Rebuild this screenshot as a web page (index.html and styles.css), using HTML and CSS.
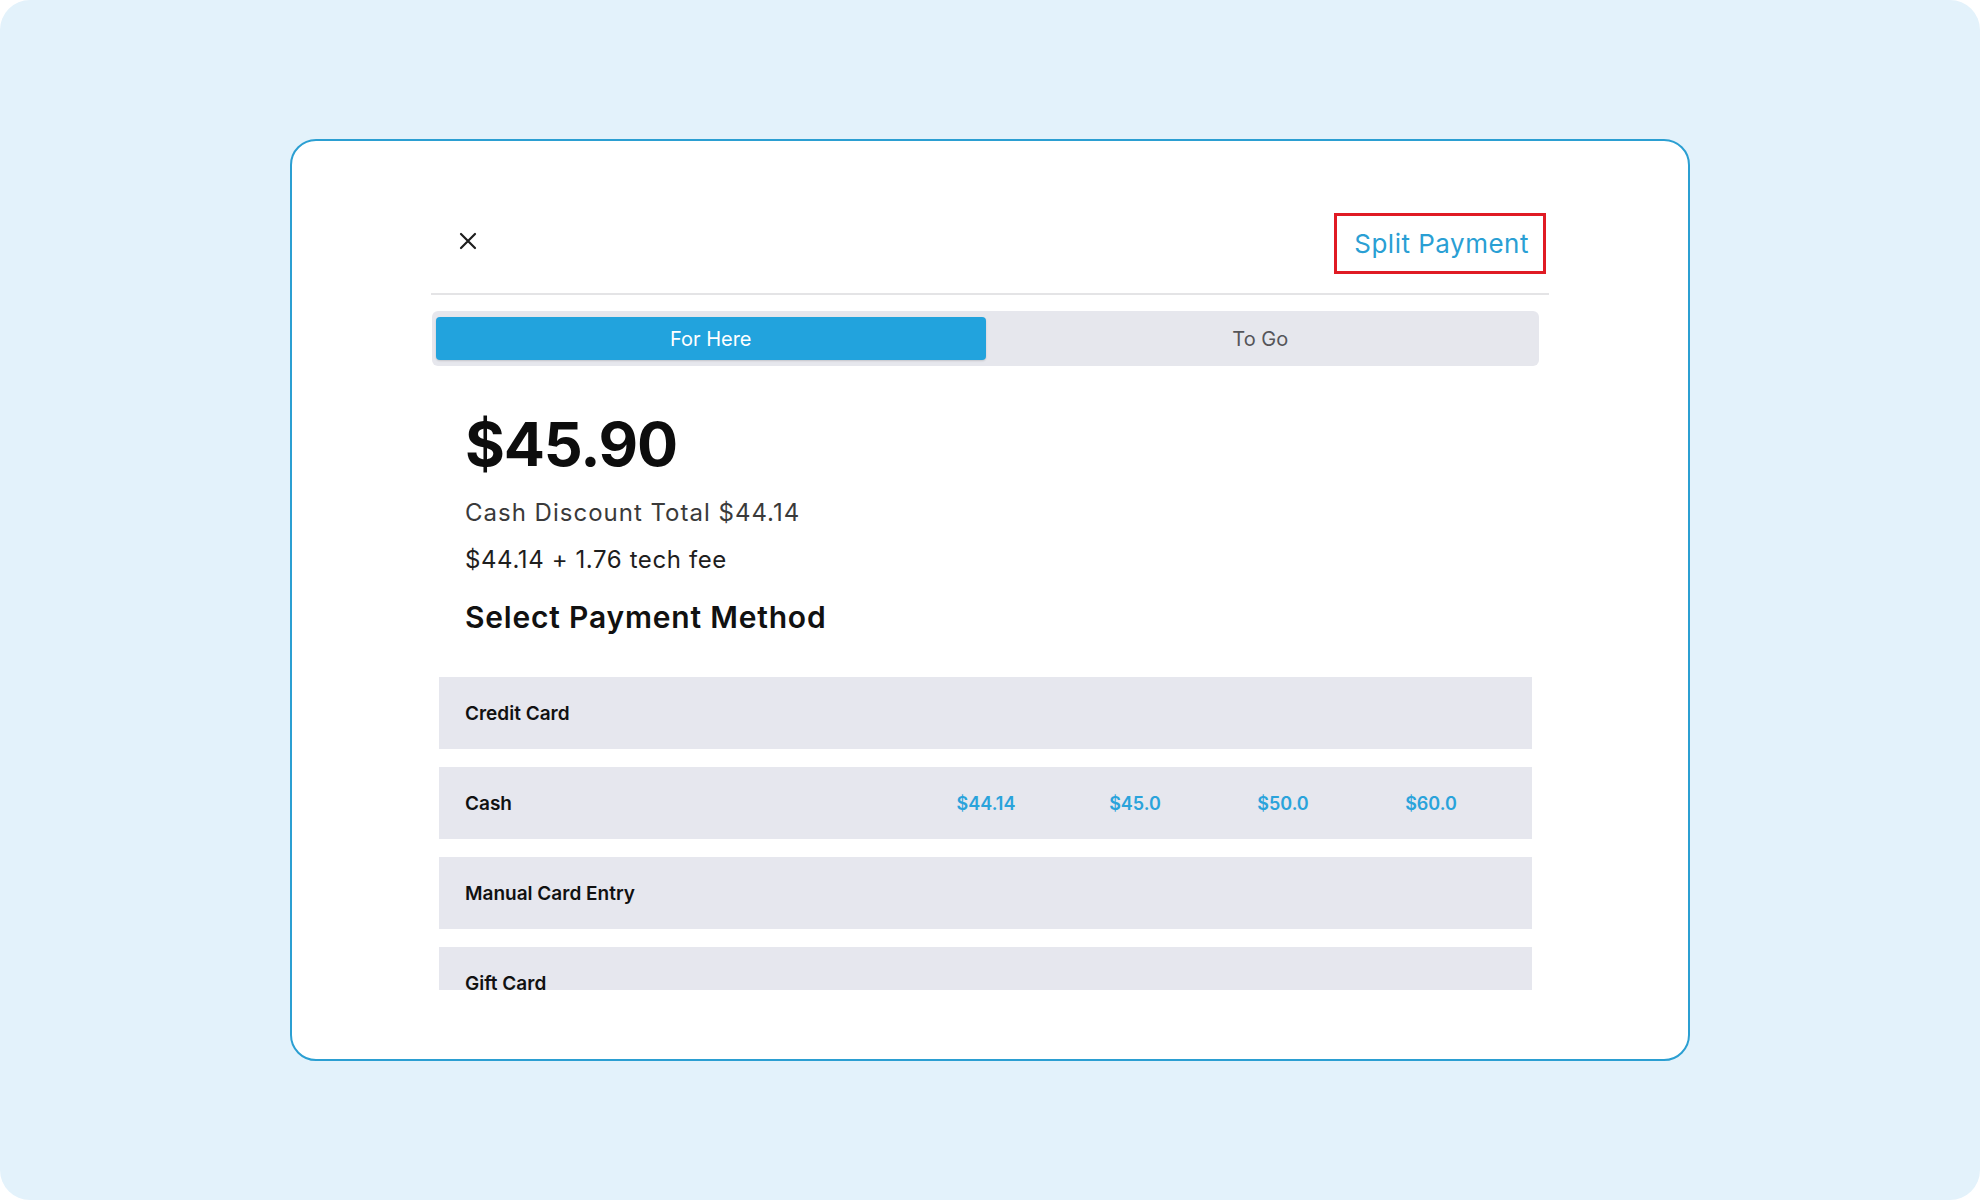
FILE: index.html
```html
<!DOCTYPE html>
<html>
<head>
<meta charset="utf-8">
<link rel="stylesheet" href="styles.css">
</head>
<body>
<div class="page">
  <div class="card">
    <div class="content">
      <div class="header">
        <button class="close" aria-label="Close">
          <svg width="18" height="18" viewBox="0 0 18 18"><path d="M2 2 L16 16 M16 2 L2 16" stroke="#1e1e1e" stroke-width="2.2" stroke-linecap="round" fill="none"/></svg>
        </button>
        <div class="split">Split Payment</div>
      </div>
      <div class="divider"></div>
      <div class="segment">
        <div class="seg active">For Here</div>
        <div class="seg">To Go</div>
      </div>
      <div class="summary">
        <div class="price">$45.90</div>
        <div class="line">Cash Discount Total $44.14</div>
        <div class="line dark">$44.14 + 1.76 tech fee</div>
        <div class="heading">Select Payment Method</div>
      </div>
      <div class="methods">
        <div class="row"><span class="label">Credit Card</span></div>
        <div class="row">
          <span class="label">Cash</span>
          <div class="amounts">
            <span>$44.14</span><span>$45.0</span><span>$50.0</span><span>$60.0</span>
          </div>
        </div>
        <div class="row"><span class="label">Manual Card Entry</span></div>
        <div class="row"><span class="label">Gift Card</span></div>
      </div>
    </div>
  </div>
</div>
</body>
</html>
```
FILE: styles.css
```css
html, body {
  margin: 0;
  padding: 0;
  background: #ffffff;
}
body {
  font-family: Inter, "Noto Sans", "Liberation Sans", sans-serif;
  color: #111;
}
.page {
  width: 1980px;
  height: 1200px;
  background: #e3f2fb;
  border-radius: 30px;
  display: flex;
  align-items: center;
  justify-content: center;
}
.card {
  box-sizing: border-box;
  width: 1400px;
  height: 922px;
  background: #ffffff;
  border: 2px solid #2b9fd2;
  border-radius: 26px;
  padding-top: 72px;
  padding-left: 139px;
}
.content {
  width: 1118px;
}
.header {
  display: flex;
  align-items: center;
  justify-content: space-between;
  height: 61px;
}
.close {
  border: 0;
  background: transparent;
  padding: 0;
  margin-left: 28px;
  margin-bottom: 5px;
  width: 18px;
  height: 18px;
  display: flex;
}
.split {
  box-sizing: border-box;
  height: 61px;
  margin-right: 3px;
  padding: 0 14px 0 17px;
  border: 3px solid #e01b24;
  color: #2a9fd4;
  font-size: 26px;
  letter-spacing: 0.5px;
  display: flex;
  align-items: center;
}
.divider {
  height: 2px;
  background: #e4e4e6;
  margin-top: 19px;
}
.segment {
  box-sizing: border-box;
  margin-top: 16px;
  margin-left: 1px;
  width: 1107px;
  height: 55px;
  background: #e6e7ed;
  border-radius: 6px;
  padding: 6px 4px 6px 4px;
  display: flex;
}
.seg {
  flex: 1;
  display: flex;
  align-items: center;
  justify-content: center;
  font-size: 20px;
  color: #555559;
  border-radius: 4px;
}
.seg.active {
  background: #22a3dd;
  color: #ffffff;
  box-shadow: 0 1px 2px rgba(0,0,0,0.15);
}
.summary {
  padding-left: 34px;
  padding-top: 46px;
}
.price {
  font-size: 61px;
  font-weight: 700;
  line-height: 64px;
  letter-spacing: -1.2px;
  color: #0d0d0d;
}
.line {
  font-size: 24px;
  line-height: 47px;
  letter-spacing: 1px;
  color: #3a3a3a;
  margin-top: 13px;
}
.line.dark {
  margin-top: 0;
  letter-spacing: 0.6px;
  color: #1e1e1e;
}
.heading {
  font-size: 30px;
  font-weight: 600;
  line-height: 40px;
  letter-spacing: 0.8px;
  margin-top: 14px;
  color: #111;
}
.methods {
  margin-top: 40px;
  margin-left: 8px;
  width: 1093px;
  height: 313px;
  overflow: hidden;
  display: flex;
  flex-direction: column;
  gap: 18px;
}
.row {
  flex: none;
  height: 72px;
  background: #e6e7ee;
  display: flex;
  align-items: center;
  padding-left: 26px;
  padding-right: 27px;
}
.label {
  font-size: 19px;
  font-weight: 600;
  color: #111;
  flex: 1;
}
.amounts {
  display: grid;
  grid-template-columns: 150px 148px 148px 148px;
}
.amounts span {
  text-align: center;
  font-size: 18px;
  font-weight: 600;
  color: #2aa3db;
}
```
